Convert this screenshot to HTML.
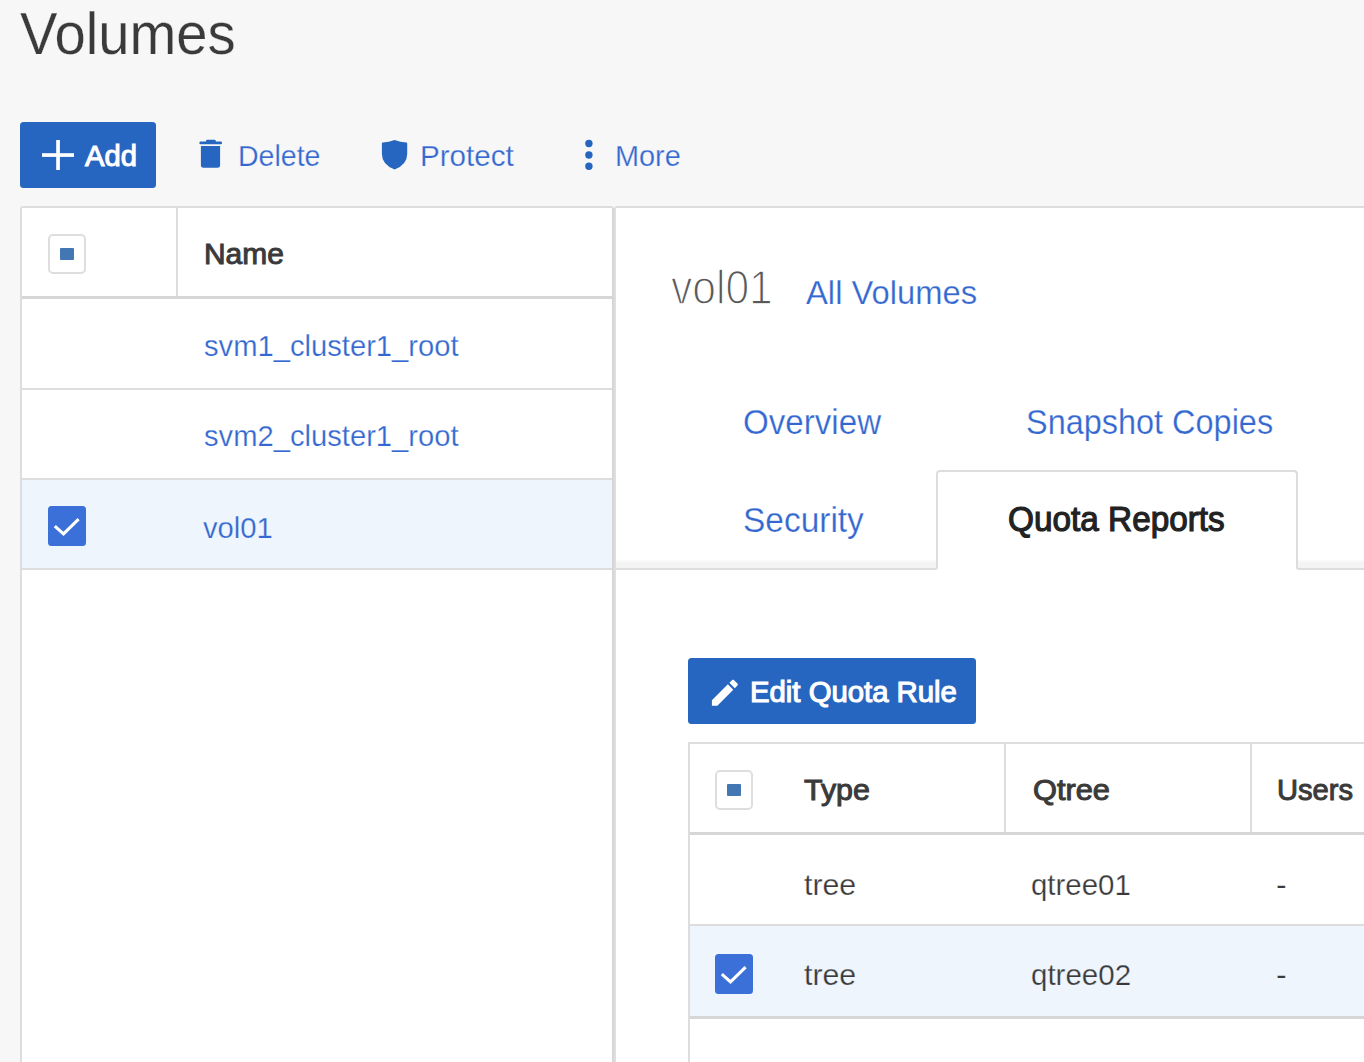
<!DOCTYPE html>
<html><head><meta charset="utf-8"><title>Volumes</title>
<style>
html,body{margin:0;padding:0;}
body{width:1364px;height:1062px;overflow:hidden;background:#f7f7f7;position:relative;font-family:"Liberation Sans",sans-serif;}
.t{position:absolute;white-space:pre;transform-origin:0 0;}
.b{position:absolute;}
</style></head><body>
<div class="b" style="left:20px;top:206px;width:594px;height:1000px;background:#fff;border:2px solid #dddddd;border-radius:3px;box-sizing:border-box;"></div><div class="b" style="left:176px;top:208px;width:2px;height:88px;background:#dddddd;"></div><div class="b" style="left:22px;top:296px;width:590px;height:3px;background:#d6d6d6;"></div><div class="b" style="left:22px;top:480px;width:590px;height:88px;background:#eef5fd;"></div><div class="b" style="left:22px;top:388px;width:590px;height:2px;background:#dddddd;"></div><div class="b" style="left:22px;top:478px;width:590px;height:2px;background:#dddddd;"></div><div class="b" style="left:22px;top:568px;width:590px;height:2px;background:#dddddd;"></div><div class="b" style="left:614px;top:206px;width:800px;height:1000px;background:#fff;border-left:2px solid #dedede;border-top:2px solid #dddddd;border-radius:3px 0 0 0;box-sizing:border-box;"></div><div class="b" style="left:612px;top:208px;width:2px;height:900px;background:#d6d6d6;"></div><div class="b" style="left:616px;top:559px;width:322px;height:11px;background:linear-gradient(#fff 0,#f4f4f4 40%,#f4f4f4 100%);border-right:2px solid #dddddd;border-bottom:2px solid #dddddd;border-bottom-right-radius:3px;box-sizing:border-box;"></div><div class="b" style="left:1296px;top:559px;width:100px;height:11px;background:linear-gradient(#fff 0,#f4f4f4 40%,#f4f4f4 100%);border-left:2px solid #dddddd;border-bottom:2px solid #dddddd;border-bottom-left-radius:3px;box-sizing:border-box;"></div><div class="b" style="left:936px;top:470px;width:362px;height:98px;background:#fff;border:2px solid #dddddd;border-bottom:none;border-radius:4px 4px 0 0;box-sizing:border-box;"></div><div class="b" style="left:20px;top:122px;width:136px;height:66px;background:#2766c0;border-radius:3.5px;"></div><div class="b" style="left:688px;top:658px;width:288px;height:66px;background:#2766c0;border-radius:3.5px;"></div><div class="b" style="left:688px;top:742px;width:700px;height:400px;background:#fff;"></div><div class="b" style="left:688px;top:742px;width:2px;height:400px;background:#dddddd;"></div><div class="b" style="left:688px;top:742px;width:700px;height:2px;background:#dddddd;"></div><div class="b" style="left:1004px;top:744px;width:2px;height:88px;background:#dddddd;"></div><div class="b" style="left:1250px;top:744px;width:2px;height:88px;background:#dddddd;"></div><div class="b" style="left:690px;top:832px;width:700px;height:3px;background:#d6d6d6;"></div><div class="b" style="left:690px;top:926px;width:700px;height:90px;background:#eef5fd;"></div><div class="b" style="left:690px;top:924px;width:700px;height:2px;background:#dddddd;"></div><div class="b" style="left:690px;top:1016px;width:700px;height:3px;background:#d6d6d6;"></div><div class="b" style="left:48px;top:234px;width:38px;height:40px;background:#fff;border:2px solid #dedede;border-radius:5px;box-sizing:border-box;"></div><div class="b" style="left:60px;top:248px;width:14px;height:12px;background:#4277b3;border-radius:1px;"></div><div class="b" style="left:48px;top:506px;width:38px;height:40px;background:#3a70d8;border-radius:3.5px;"></div><svg class="b" style="left:48px;top:506px" width="38" height="40" viewBox="0 0 38 40"><path d="M6.8 20.2 L15.5 27.8 L30.6 13.2" fill="none" stroke="#fff" stroke-width="3.1"/></svg><div class="b" style="left:715px;top:770px;width:38px;height:40px;background:#fff;border:2px solid #dedede;border-radius:5px;box-sizing:border-box;"></div><div class="b" style="left:727px;top:784px;width:14px;height:12px;background:#4277b3;border-radius:1px;"></div><div class="b" style="left:715px;top:954px;width:38px;height:40px;background:#3a70d8;border-radius:3.5px;"></div><svg class="b" style="left:715px;top:954px" width="38" height="40" viewBox="0 0 38 40"><path d="M6.8 20.2 L15.5 27.8 L30.6 13.2" fill="none" stroke="#fff" stroke-width="3.1"/></svg>

<svg class="b" style="left:0;top:0" width="1364" height="1062">
 <g fill="#fff"><rect x="42" y="153.2" width="32" height="3.7"/><rect x="56.2" y="140" width="3.7" height="30"/></g>
 <g fill="#2766c0">
  <rect x="199.4" y="141.6" width="22.6" height="2.7" rx="1.1"/>
  <rect x="206" y="139.7" width="9.8" height="3.2" rx="1.4"/>
  <path d="M200.9 146 H220.1 V165.4 Q220.1 167.8 217.7 167.8 H203.3 Q200.9 167.8 200.9 165.4 Z"/>
 </g>
 <path fill="#2766c0" d="M381.9 143.3 Q381.9 142.5 382.8 142.5 Q388.8 142.2 394.6 139.9 Q400.4 142.2 406.3 142.5 Q407.2 142.5 407.2 143.3 L407.2 154 Q407.2 164.5 394.6 169.6 Q381.9 164.5 381.9 154 Z"/>
 <g fill="#2766c0"><circle cx="588.9" cy="143.5" r="3.7"/><circle cx="588.9" cy="155" r="3.7"/><circle cx="588.9" cy="166.3" r="3.7"/></g>
 <g transform="translate(707.6,675.4) scale(1.44)" fill="#fff"><path d="M3 17.25V21h3.75L17.81 9.94l-3.75-3.75L3 17.25zM20.71 7.04c.39-.39.39-1.02 0-1.41l-2.34-2.34c-.39-.39-1.02-.39-1.41 0l-1.83 1.83 3.75 3.75 1.83-1.83z"/></g>
</svg>

<div class="t" style="left:20.44px;top:1.00px;font-size:58.5px;line-height:65px;font-weight:400;color:#3a3a3a;transform:scaleX(0.9607);-webkit-text-stroke:0.25px #f7f7f7;">Volumes</div><div class="t" style="left:84.80px;top:139.00px;font-size:30px;line-height:33px;font-weight:400;color:#ffffff;transform:scaleX(0.9727);-webkit-text-stroke:1.1px #ffffff;">Add</div><div class="t" style="left:237.72px;top:139.00px;font-size:29.5px;line-height:33px;font-weight:400;color:#3468d0;transform:scaleX(0.9668);-webkit-text-stroke:0.25px #f7f7f7;">Delete</div><div class="t" style="left:420.43px;top:139.00px;font-size:29.5px;line-height:33px;font-weight:400;color:#3468d0;transform:scaleX(1.0037);-webkit-text-stroke:0.25px #f7f7f7;">Protect</div><div class="t" style="left:615.19px;top:139.00px;font-size:29.5px;line-height:33px;font-weight:400;color:#3468d0;transform:scaleX(0.9791);-webkit-text-stroke:0.25px #f7f7f7;">More</div><div class="t" style="left:203.61px;top:237.30px;font-size:29.7px;line-height:33px;font-weight:400;color:#3a3a3a;transform:scaleX(1.0074);-webkit-text-stroke:1.0px #3a3a3a;">Name</div><div class="t" style="left:203.62px;top:329.30px;font-size:30px;line-height:33px;font-weight:400;color:#3468d0;transform:scaleX(0.9724);-webkit-text-stroke:0.25px #fff;">svm1_cluster1_root</div><div class="t" style="left:203.62px;top:419.00px;font-size:30px;line-height:33px;font-weight:400;color:#3468d0;transform:scaleX(0.9724);-webkit-text-stroke:0.25px #fff;">svm2_cluster1_root</div><div class="t" style="left:203.21px;top:510.50px;font-size:30px;line-height:33px;font-weight:400;color:#3468d0;transform:scaleX(0.9742);-webkit-text-stroke:0.25px #eef5fd;">vol01</div><div class="t" style="left:670.87px;top:261.00px;font-size:47.5px;line-height:53px;font-weight:400;color:#585858;transform:scaleX(0.8963);-webkit-text-stroke:1.4px #fff;">vol01</div><div class="t" style="left:806.00px;top:274.00px;font-size:33.5px;line-height:37px;font-weight:400;color:#3468d0;transform:scaleX(0.9778);-webkit-text-stroke:0.25px #fff;">All Volumes</div><div class="t" style="left:742.64px;top:402.80px;font-size:34.3px;line-height:38px;font-weight:400;color:#3468d0;transform:scaleX(0.9659);-webkit-text-stroke:0.25px #fff;">Overview</div><div class="t" style="left:1025.88px;top:403.00px;font-size:34.5px;line-height:38px;font-weight:400;color:#3468d0;transform:scaleX(0.9404);-webkit-text-stroke:0.25px #fff;">Snapshot Copies</div><div class="t" style="left:742.53px;top:500.60px;font-size:34.3px;line-height:38px;font-weight:400;color:#3468d0;transform:scaleX(0.9754);-webkit-text-stroke:0.25px #fff;">Security</div><div class="t" style="left:1008.33px;top:500.40px;font-size:34.5px;line-height:38px;font-weight:400;color:#222222;transform:scaleX(0.9662);-webkit-text-stroke:1.2px #222222;">Quota Reports</div><div class="t" style="left:750.26px;top:675.80px;font-size:29px;line-height:32px;font-weight:400;color:#ffffff;transform:scaleX(1.0106);-webkit-text-stroke:1.1px #ffffff;">Edit Quota Rule</div><div class="t" style="left:804.29px;top:774.00px;font-size:29px;line-height:32px;font-weight:400;color:#3a3a3a;transform:scaleX(1.0476);-webkit-text-stroke:1.0px #3a3a3a;">Type</div><div class="t" style="left:1032.96px;top:774.00px;font-size:29px;line-height:32px;font-weight:400;color:#3a3a3a;transform:scaleX(1.0602);-webkit-text-stroke:1.0px #3a3a3a;">Qtree</div><div class="t" style="left:1276.87px;top:774.00px;font-size:29px;line-height:32px;font-weight:400;color:#3a3a3a;transform:scaleX(1.0041);-webkit-text-stroke:1.0px #3a3a3a;">Users</div><div class="t" style="left:803.89px;top:867.50px;font-size:30px;line-height:33px;font-weight:400;color:#3a3a3a;transform:scaleX(1.0100);-webkit-text-stroke:0.25px #fff;">tree</div><div class="t" style="left:1031.42px;top:868.00px;font-size:30px;line-height:33px;font-weight:400;color:#3a3a3a;transform:scaleX(0.9808);-webkit-text-stroke:0.25px #fff;">qtree01</div><div class="t" style="left:1275.72px;top:868.00px;font-size:30px;line-height:33px;font-weight:400;color:#3a3a3a;transform:scaleX(1.0667);-webkit-text-stroke:0.25px #fff;">-</div><div class="t" style="left:803.89px;top:957.50px;font-size:30px;line-height:33px;font-weight:400;color:#3a3a3a;transform:scaleX(1.0100);-webkit-text-stroke:0.25px #eef5fd;">tree</div><div class="t" style="left:1031.42px;top:957.50px;font-size:30px;line-height:33px;font-weight:400;color:#3a3a3a;transform:scaleX(0.9838);-webkit-text-stroke:0.25px #eef5fd;">qtree02</div><div class="t" style="left:1275.72px;top:957.50px;font-size:30px;line-height:33px;font-weight:400;color:#3a3a3a;transform:scaleX(1.0667);-webkit-text-stroke:0.25px #eef5fd;">-</div>
</body></html>
